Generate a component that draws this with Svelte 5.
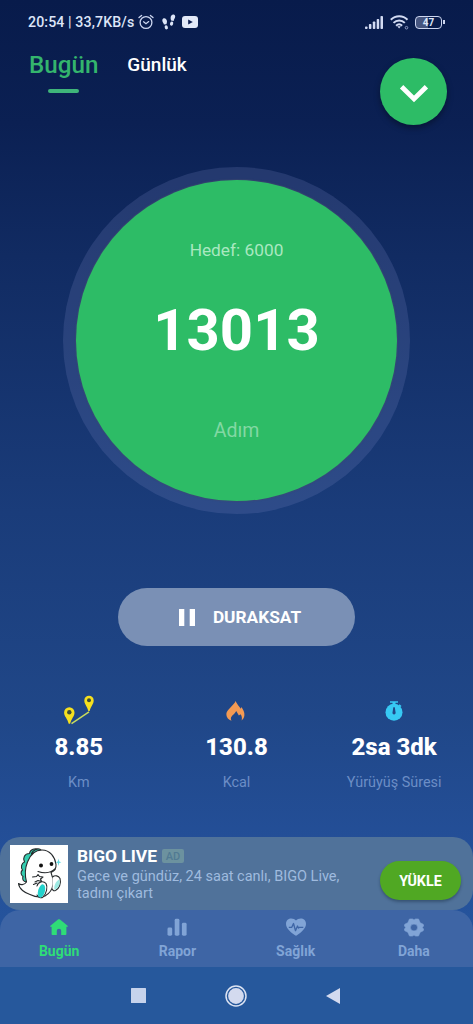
<script>
  let steps = $state(13013);
  let goal = $state(6000);
  let selectedTab = $state('Bugün');
  let selectedPage = $state('Bugün');

  const tabs = ['Bugün', 'Günlük'];

  const stats = [
    { icon: 'route', value: '8.85', label: 'Km' },
    { icon: 'flame', value: '130.8', label: 'Kcal' },
    { icon: 'timer', value: '2sa 3dk', label: 'Yürüyüş Süresi' }
  ];

  const pages = [
    { icon: 'home', name: 'Bugün' },
    { icon: 'chart', name: 'Rapor' },
    { icon: 'heart', name: 'Sağlık' },
    { icon: 'gear', name: 'Daha' }
  ];
</script>

<main>
  <div class="status">
    <span class="clock">20:54 | 33,7KB/s</span>
    <svg class="alarm" width="16" height="16" viewBox="0 0 16 16" fill="none" stroke="#cdd6f0" stroke-width="1.3" stroke-linecap="round">
      <circle cx="8" cy="8.5" r="5.9" />
      <path d="M1 3.6 3.6 1.4M15 3.6 12.4 1.4M5.6 7.8 8 9.7 10.7 7.6" />
    </svg>
    <svg class="steps" width="14" height="17" viewBox="0 0 14 17" fill="#dde5f8">
      <path d="M1.200 4.600c1.900-.9 3.700.8 3.800 2.900 0 1-.4 1.800-.6 2.700L1.900 10.600C1.800 9 .4 8.200.3 6.400.3 5.600.6 4.900 1.200 4.600z" />
      <ellipse cx="4.300" cy="13.300" rx="1.600" ry="2.100" transform="rotate(-15 4.300 13.300)" />
      <path d="M12.200.7c-1.900-.7-3.600 1-3.600 3.200 0 1 .4 1.800.5 2.600l2.600.5c0-1.500 1.500-2.700 1.500-4.400 0-.8-.4-1.600-1-1.900z" />
      <ellipse cx="9.600" cy="9.600" rx="1.600" ry="2.100" transform="rotate(15 9.600 9.600)" />
    </svg>
    <svg class="video" width="16" height="12" viewBox="0 0 16 12">
      <rect width="16" height="12" rx="3" fill="#e3e9f8" />
      <path d="M6.200 3.400v5.200L10.800 6z" fill="#0a1c4e" />
    </svg>
    <svg class="signal" width="18" height="13" viewBox="0 0 18 13" fill="#d3dbf3">
      <rect x="0" y="10.500" width="2.500" height="2.500" rx=".8" />
      <rect x="3.900" y="8" width="2.500" height="5" rx=".8" />
      <rect x="7.800" y="5.400" width="2.500" height="7.600" rx=".8" />
      <rect x="11.700" y="3" width="2.500" height="10" rx=".8" />
      <rect x="15.500" y="0" width="2.500" height="13" rx=".8" />
    </svg>
    <svg class="wifi" width="19" height="15" viewBox="0 0 19 15" fill="none" stroke="#d3dbf3" stroke-width="2">
      <path d="M.8 4.800C5.500.1 13 .1 17.500 4.800M3.500 7.900c3.200-3.200 8.200-3.200 11.300 0M6.100 10.700c1.800-1.700 4.300-1.700 6 0" />
      <path d="M7.300 11.300h3.600L9.100 13.600z" fill="#d3dbf3" stroke="none" />
      <circle cx="16.500" cy="12.700" r="1.300" stroke-width="1" stroke="#8f9cc6" />
    </svg>
    <div class="battery"><span>47</span></div>
  </div>

  <header>
    <nav class="tabs">
      {#each tabs as tab}
        <button class="tab {selectedTab === tab ? 'active' : ''}" onclick={() => (selectedTab = tab)}>{tab}</button>
      {/each}
    </nav>
    <button class="toggle" aria-label="Aç">
      <svg width="30" height="20" viewBox="0 0 30 20" fill="none" stroke="#fff" stroke-width="4.800">
        <path d="M2.600 2.800 15 15 27.400 2.800" />
      </svg>
    </button>
  </header>

  <section class="ring">
    <div class="disc">
      <span class="goal">Hedef: {goal}</span>
      <strong class="count">{steps}</strong>
      <span class="unit">Adım</span>
    </div>
  </section>

  <button class="pause">
    <svg width="16" height="17" viewBox="0 0 16 17" fill="#fff">
      <rect width="5.300" height="17" />
      <rect x="10.700" width="5.300" height="17" />
    </svg>
    DURAKSAT
  </button>

  <section class="stats">
    {#each stats as stat}
      <div class="stat">
        <div class="stat-icon {stat.icon}">
          {#if stat.icon === 'route'}
            <svg width="30" height="30" viewBox="0 0 30 30">
              <path d="M7.500 28.600 25 16.800" stroke="#c9dc5c" stroke-width="1.500" />
              <path d="M5.300 12.300a5.200 5.200 0 0 1 5.200 5.200c0 3.900-3.100 6-4.400 11.200H4.700C3.500 23.500.1 21.400.1 17.500a5.200 5.200 0 0 1 5.200-5.200z" fill="#f6e01f" />
              <circle cx="5.300" cy="17.300" r="2.200" fill="#3e4e38" />
              <path d="M25 .7a4.700 4.700 0 0 1 4.700 4.700c0 3.500-2.800 5.700-4 10.500h-1.400c-1.200-4.800-4-7-4-10.500A4.700 4.700 0 0 1 25 .7z" fill="#f6e01f" />
              <circle cx="25" cy="5.200" r="2" fill="#3e4e38" />
            </svg>
          {:else if stat.icon === 'flame'}
            <svg width="19" height="20" viewBox="0 0 19 20" fill="#f39a53">
              <path d="M9.600 0c.9 2.100 2.100 3.600 3.500 5.600l1.700 2.100.6-1.600c1.800 2.600 3.300 5.200 3 8.200-.2 2.200-1.200 3.900-2.700 5.100.5-2.500.2-4.300-1.200-6.100l-1.600 1.300-2.700-4.700c-1.300 3-5 4.600-5.300 7.200-.1 1.100.1 1.900.6 2.600C2.400 18.500.6 16.700.4 14 .1 9.900 3.300 8 5.600 5.200 7.100 3.500 8.900 2.300 9.600 0z" />
            </svg>
          {:else}
            <svg width="18" height="20" viewBox="0 0 18 20">
              <path d="M5 .3h8v1.500h-2.500V3H7.500V1.800H5z" fill="#37c9f3" />
              <path d="m14.500 3.200 2 1.800-1 1-2-1.500z" fill="#37c9f3" />
              <circle cx="9" cy="11.200" r="8.500" fill="#37c9f3" />
              <path d="M8.300 6.200h1.500l.7 4.900a1.600 1.600 0 1 1-2.900 0z" fill="#204788" />
            </svg>
          {/if}
        </div>
        <strong>{stat.value}</strong>
        <span>{stat.label}</span>
      </div>
    {/each}
  </section>

  <aside class="ad">
    <svg class="ad-logo" width="58" height="58" viewBox="0 0 58 58" stroke="#25292b" stroke-width="1.100" stroke-linecap="round" stroke-linejoin="round">
      <rect width="58" height="58" fill="#fff" stroke="none" />
      <!-- back spikes -->
      <path d="M16.500 37c-3.500-.5-4.500-3-3.500-5.500-2.500-1.500-2.500-5-.5-6.500-2-2.500-1-7 2-8-2-4 0-8.500 5-8.500.5-4 6-6 9-3.500L23 14z" fill="#35cdb0" />
      <path d="M21.500 9c1-4 7-7 10-3.500z" fill="#35cdb0" />
      <!-- body -->
      <path d="M16.500 37c-1.500-6-1.500-14 1-20C20.500 9 26 5 32 5c8 0 13 7 14 14.500.4 4-1.500 6.500-5 8 1.500 3.500 2.500 7 2 11.500-.5 5-3.500 9.500-8 12-5 2-11 .5-15-1.500-5-1.500-11-5.500-11.500-11 2 1.500 5.500 2 8-1.500z" fill="#fff" />
      <path d="M42.500 32c2.500-2 6-1.500 7.500 1.500 1.500 5-1 10.500-4.500 12-2 .8-3-.5-3-1.500" fill="#fff" />
      <path d="M49 34.500c2 4-.5 9-4.500 10.200-1-3 1-8.200 4.500-10.200z" fill="#9de9e2" stroke="none" />
      <path d="M27 41c1-4.500 6.500-5.500 9-2.500 2 3.500.5 10-3 13.500-2 1.500-5 .5-6-2" fill="#fff" />
      <ellipse cx="31.500" cy="46" rx="3.400" ry="6.800" transform="rotate(15 31.500 46)" fill="#24d2cc" stroke="none" />
      <path d="M28 26.500c6 2 13 1.500 17-2.500M22.500 32l4-.5 1.500-2 1.500 2 3.500.5-2.500 2 1 2.500-3.500-1-3 1.500M23.500 39.500l3.500-1.500" fill="none" />
      <g fill="#111" stroke="none">
        <circle cx="31" cy="20.500" r="2" />
        <circle cx="41.500" cy="19" r="1.900" />
      </g>
      <path d="m48.500 13.500.7 3 2.200.8-2.200.8-.7 3-.7-3-2.200-.8 2.200-.8z" fill="#63dbe4" stroke="none" />
    </svg>
    <div class="ad-text">
      <h2>BIGO LIVE <small>AD</small></h2>
      <p>Gece ve gündüz, 24 saat canlı, BIGO Live,<br />tadını çıkart</p>
    </div>
    <button class="install">YÜKLE</button>
  </aside>

  <nav class="pages">
    {#each pages as page}
      <button class="page {selectedPage === page.name ? 'active' : ''}" onclick={() => (selectedPage = page.name)}>
        <svg width="20" height="19" viewBox="0 0 20 20" preserveAspectRatio="none" fill="currentColor">
          {#if page.icon === 'home'}
            <path d="M10 1.200c.4 0 .7.200 1 .4l7.600 6.500c.6.500.3 1.200-.4 1.200h-.8v7.500c0 .8-.5 1.200-1.200 1.200h-4v-4.500a2.200 2.200 0 0 0-4.400 0V18h-4c-.8 0-1.200-.5-1.200-1.200V9.300h-.8c-.7 0-1-.7-.4-1.200L9 1.600c.3-.2.6-.4 1-.4z" />
          {:else if page.icon === 'chart'}
            <rect x=".5" y="10" width="4.700" height="8.600" rx="1.500" />
            <rect x="7.700" y=".8" width="4.700" height="17.800" rx="1.500" />
            <rect x="14.900" y="5" width="4.700" height="13.600" rx="1.500" />
          {:else if page.icon === 'heart'}
            <path d="M10 2.700C12.500-.6 20-.6 20 6.200c0 5-5.700 9.300-9 12-.6.500-1.400.5-2 0C5.700 15.500 0 11.200 0 6.200 0-.6 7.500-.6 10 2.700z" />
            <path d="M2.800 9.800h3l1.700-4 2 7.600 2-5 1 2.200 1-.8h3.800" fill="none" stroke="#3e65a5" stroke-width="1.300" stroke-linejoin="round" />
          {:else}
            <!-- six lobed gear -->
            <path fill-rule="evenodd" d="M5.500 1h3l1.500 1 1.500-1h3l1.700 4 3 1.500.5 2L18.200 10l1.500 1.500-.5 2-3 1.500-1.700 4h-3L10 18l-1.500 1h-3l-1.700-4-3-1.500-.5-2L1.800 10 .3 8.500l.5-2 3-1.500zM10 6.400a3.600 3.600 0 1 0 0 7.200 3.600 3.600 0 0 0 0-7.200z" stroke="currentColor" stroke-width=".6" stroke-linejoin="round" />
          {/if}
        </svg>
        <span>{page.name}</span>
      </button>
    {/each}
  </nav>

  <div class="system">
    <svg width="15" height="15" viewBox="0 0 15 15"><rect width="15" height="15" rx=".5" fill="#c6d3ec" /></svg>
    <svg width="22" height="22" viewBox="0 0 22 22">
      <circle cx="11" cy="11" r="10" fill="none" stroke="#dce3f2" stroke-width="1.500" />
      <circle cx="11" cy="11" r="7.900" fill="#d3daef" />
    </svg>
    <svg width="15" height="16" viewBox="0 0 15 16"><path d="M14 0v16L0 8z" fill="#d3daef" /></svg>
  </div>
</main>

<style>
  :global(body) {
    margin: 0;
  }

  main {
    display: flex;
    flex-direction: column;
    width: 473px;
    height: 1024px;
    overflow: hidden;
    font-family: Roboto, sans-serif;
    color: #fff;
    background: linear-gradient(#081b4b 0%, #0b2053 12%, #112b62 25%, #1a3c7a 50%, #204788 70%, #24509a 84%, #26599f 100%);
  }

  button {
    margin: 0;
    padding: 0;
    border: none;
    background: none;
    color: inherit;
    font-family: inherit;
    cursor: pointer;
  }

  svg {
    display: block;
    flex: none;
  }

  /* status bar */
  .status {
    display: flex;
    align-items: center;
    box-sizing: border-box;
    height: 44px;
    padding: 0 28px;
    color: #dde5f8;
  }
  .clock {
    width: 110px;
    font-size: 14.2px;
    font-weight: 500;
    letter-spacing: 0.1px;
    white-space: nowrap;
  }
  .steps {
    margin-left: 8px;
  }
  .video {
    margin-left: 6px;
  }
  .signal {
    margin-left: auto;
  }
  .wifi {
    margin-left: 7px;
  }
  .battery {
    display: flex;
    align-items: center;
    justify-content: center;
    box-sizing: border-box;
    width: 27px;
    height: 13px;
    margin: 0 3px 0 6px;
    border: 1.5px solid #ccd5ef;
    border-radius: 4px;
    background: linear-gradient(90deg, #46557f 46%, transparent 46%);
    font-size: 10px;
    font-weight: 700;
    position: relative;
  }
  .battery::after {
    content: "";
    position: absolute;
    right: -4px;
    top: 3px;
    width: 2px;
    height: 4px;
    background: #ccd5ef;
  }

  /* top tabs */
  header {
    display: flex;
    justify-content: space-between;
    height: 123px;
    padding: 0 26px 0 29px;
    box-sizing: border-box;
  }
  .tabs {
    display: flex;
    align-items: flex-start;
    gap: 29px;
    padding-top: 6px;
  }
  .tab {
    display: flex;
    flex-direction: column;
    align-items: center;
    height: 43px;
    line-height: 30px;
    font-size: 19px;
    font-weight: 500;
  }
  .tab.active {
    color: #34b56d;
    font-size: 24.2px;
  }
  .tab.active::after {
    content: "";
    width: 31px;
    height: 4px;
    margin-top: 9px;
    border-radius: 2px;
    background: #3fb57a;
  }
  .toggle {
    display: flex;
    align-items: center;
    justify-content: center;
    width: 67px;
    height: 67px;
    margin-top: 14px;
    border-radius: 50%;
    background: #2dbc66;
    box-shadow: 0 3px 6px rgba(0, 0, 0, 0.35);
  }
  .toggle svg {
    margin-top: 4px;
  }

  /* step counter */
  .ring {
    display: flex;
    align-items: center;
    justify-content: center;
    align-self: center;
    width: 347px;
    height: 347px;
    border-radius: 50%;
    background: rgba(120, 130, 190, 0.22);
  }
  .disc {
    display: flex;
    flex-direction: column;
    align-items: center;
    box-sizing: border-box;
    width: 321px;
    height: 321px;
    padding-top: 59px;
    border-radius: 50%;
    background: #2dbc66;
    box-shadow: 0 0 1px 1px rgba(65, 75, 110, 0.5);
  }
  .goal {
    line-height: 22px;
    font-size: 17.3px;
    color: #a9e8c0;
  }
  .count {
    margin-top: 34px;
    line-height: 70px;
    font-size: 58px;
    font-weight: 700;
  }
  .unit {
    margin-top: 54px;
    line-height: 24px;
    font-size: 19.5px;
    color: #82d8a3;
  }

  .pause {
    display: flex;
    align-items: center;
    justify-content: center;
    align-self: center;
    gap: 18px;
    box-sizing: border-box;
    width: 237px;
    height: 58px;
    margin-top: 74px;
    padding-left: 7px;
    border-radius: 29px;
    background: #7a90b5;
    font-size: 17.3px;
    font-weight: 700;
  }

  /* distance, calories, duration */
  .stats {
    display: grid;
    grid-template-columns: repeat(3, 1fr);
    height: 191px;
    padding-top: 49px;
    box-sizing: border-box;
  }
  .stat {
    display: flex;
    flex-direction: column;
    align-items: center;
  }
  .stat-icon {
    display: flex;
    align-items: center;
    box-sizing: border-box;
    height: 30px;
  }
  .stat-icon.flame,
  .stat-icon.timer {
    padding: 2px 1px 0 0;
  }
  .stat strong {
    margin-top: 7px;
    line-height: 30px;
    font-size: 24px;
    font-weight: 800;
  }
  .stat span {
    margin-top: 11px;
    line-height: 20px;
    font-size: 14.4px;
    color: #6c8ec6;
  }

  /* ad banner */
  .ad {
    display: flex;
    align-items: center;
    box-sizing: border-box;
    height: 73px;
    padding: 0 12px 0 10px;
    border-radius: 20px;
    background: #50729a;
  }
  .ad-text {
    flex: 1;
    margin-left: 9px;
  }
  h2 {
    display: flex;
    align-items: center;
    gap: 5px;
    margin: 0;
    line-height: 20px;
    font-size: 17.4px;
    font-weight: 700;
  }
  small {
    width: 22px;
    height: 14px;
    line-height: 15px;
    border-radius: 2px;
    background: #6c929f;
    color: #517a93;
    font-size: 11px;
    font-weight: 500;
    text-align: center;
  }
  p {
    margin: 2px 0 0;
    line-height: 17px;
    font-size: 14.5px;
    color: #9fbbdf;
    white-space: nowrap;
  }
  .install {
    width: 81px;
    height: 39px;
    margin-top: 13px;
    padding-top: 2px;
    border-radius: 20px;
    background: #50a823;
    box-shadow: 0 2px 3px rgba(20, 40, 60, 0.4);
    font-size: 14.3px;
    font-weight: 700;
  }

  /* bottom navigation */
  .pages {
    display: grid;
    grid-template-columns: repeat(4, 1fr);
    height: 57px;
    border-radius: 20px 20px 0 0;
    background: #3e65a5;
  }
  .page {
    display: flex;
    flex-direction: column;
    align-items: center;
    padding-top: 8px;
    color: #81a4d6;
    font-size: 14px;
    font-weight: 700;
  }
  .page.active {
    color: #2fdc77;
  }
  .page span {
    margin-top: 5px;
    line-height: 18px;
  }

  .system {
    display: flex;
    align-items: center;
    justify-content: center;
    gap: 79px;
    box-sizing: border-box;
    height: 57px;
    padding-right: 2px;
    background: #26589c;
  }
</style>
